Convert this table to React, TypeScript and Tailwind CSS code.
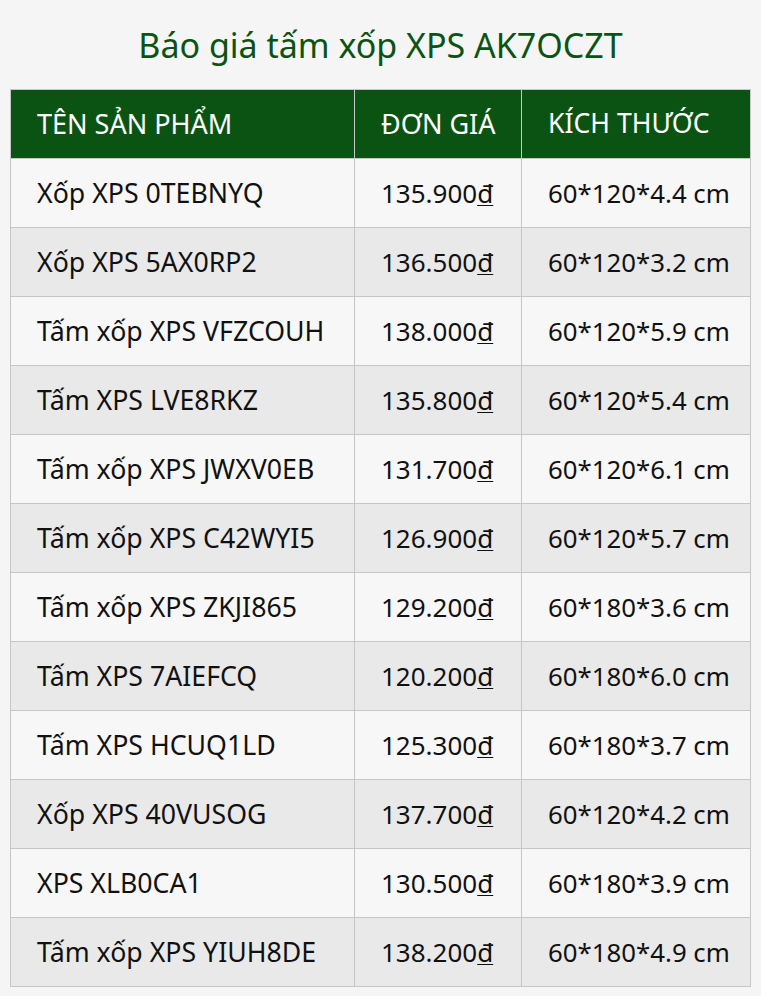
const rows = [
  { name: "Xốp XPS 0TEBNYQ", price: "135.900", size: "60*120*4.4 cm" },
  { name: "Xốp XPS 5AX0RP2", price: "136.500", size: "60*120*3.2 cm" },
  { name: "Tấm xốp XPS VFZCOUH", price: "138.000", size: "60*120*5.9 cm" },
  { name: "Tấm XPS LVE8RKZ", price: "135.800", size: "60*120*5.4 cm" },
  { name: "Tấm xốp XPS JWXV0EB", price: "131.700", size: "60*120*6.1 cm" },
  { name: "Tấm xốp XPS C42WYI5", price: "126.900", size: "60*120*5.7 cm" },
  { name: "Tấm xốp XPS ZKJI865", price: "129.200", size: "60*180*3.6 cm" },
  { name: "Tấm XPS 7AIEFCQ", price: "120.200", size: "60*180*6.0 cm" },
  { name: "Tấm XPS HCUQ1LD", price: "125.300", size: "60*180*3.7 cm" },
  { name: "Xốp XPS 40VUSOG", price: "137.700", size: "60*120*4.2 cm" },
  { name: "XPS XLB0CA1", price: "130.500", size: "60*180*3.9 cm" },
  { name: "Tấm xốp XPS YIUH8DE", price: "138.200", size: "60*180*4.9 cm" },
];

export default function App() {
  return (
    <div className="min-h-[996px] w-[761px] bg-[#f5f5f5] px-[10px] font-['Noto_Sans','Open_Sans',sans-serif]">
      <h1 className="pt-[21px] pb-[20px] text-center text-[34px] leading-[48px] text-[#0b5312]">
        Báo giá tấm xốp XPS AK7OCZT
      </h1>
      <table className="w-[740px] table-fixed border-collapse text-[26px] text-[#111]">
        <colgroup>
          <col className="w-[344px]" />
          <col className="w-[167px]" />
          <col className="w-[229px]" />
        </colgroup>
        <thead>
          <tr className="h-[69px] bg-[#0b5312] text-[27px] text-white">
            <th className="border border-[#c6c6c6] pl-[26px] text-left font-normal">TÊN SẢN PHẨM</th>
            <th className="border border-[#c6c6c6] pl-[26px] text-left font-normal">ĐƠN GIÁ</th>
            <th className="border border-[#c6c6c6] pl-[26px] text-left text-[26.6px] font-normal">KÍCH THƯỚC</th>
          </tr>
        </thead>
        <tbody>
          {rows.map((r, i) => (
            <tr key={r.name} className={`h-[69px] ${i % 2 === 0 ? "bg-[#f7f7f7]" : "bg-[#e9e9e9]"}`}>
              <td className="border border-[#c6c6c6] pl-[26px] text-[26.7px]">{r.name}</td>
              <td className="border border-[#c6c6c6] pl-[26px]">
                {r.price}
                <span className="underline decoration-1 underline-offset-2">đ</span>
              </td>
              <td className="border border-[#c6c6c6] pl-[26px] text-[25.8px]">{r.size}</td>
            </tr>
          ))}
        </tbody>
      </table>
    </div>
  );
}
